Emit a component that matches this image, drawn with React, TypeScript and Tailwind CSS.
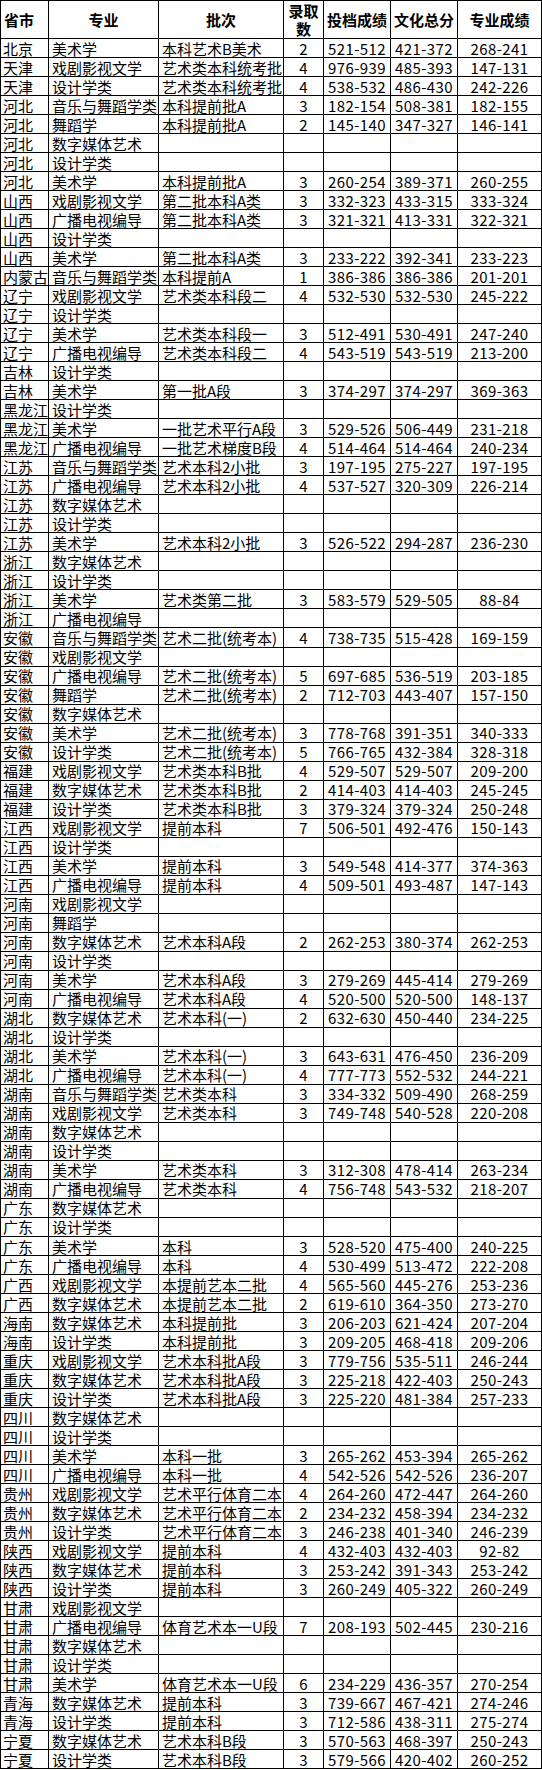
import React from "react";

type Row = [string, string, string?, string?, string?, string?, string?];

const rows: Row[] = [
  ["北京", "美术学", "本科艺术B美术", "2", "521-512", "421-372", "268-241"],
  ["天津", "戏剧影视文学", "艺术类本科统考批", "4", "976-939", "485-393", "147-131"],
  ["天津", "设计学类", "艺术类本科统考批", "4", "538-532", "486-430", "242-226"],
  ["河北", "音乐与舞蹈学类", "本科提前批A", "3", "182-154", "508-381", "182-155"],
  ["河北", "舞蹈学", "本科提前批A", "2", "145-140", "347-327", "146-141"],
  ["河北", "数字媒体艺术"],
  ["河北", "设计学类"],
  ["河北", "美术学", "本科提前批A", "3", "260-254", "389-371", "260-255"],
  ["山西", "戏剧影视文学", "第二批本科A类", "3", "332-323", "433-315", "333-324"],
  ["山西", "广播电视编导", "第二批本科A类", "3", "321-321", "413-331", "322-321"],
  ["山西", "设计学类"],
  ["山西", "美术学", "第二批本科A类", "3", "233-222", "392-341", "233-223"],
  ["内蒙古", "音乐与舞蹈学类", "本科提前A", "1", "386-386", "386-386", "201-201"],
  ["辽宁", "戏剧影视文学", "艺术类本科段二", "4", "532-530", "532-530", "245-222"],
  ["辽宁", "设计学类"],
  ["辽宁", "美术学", "艺术类本科段一", "3", "512-491", "530-491", "247-240"],
  ["辽宁", "广播电视编导", "艺术类本科段二", "4", "543-519", "543-519", "213-200"],
  ["吉林", "设计学类"],
  ["吉林", "美术学", "第一批A段", "3", "374-297", "374-297", "369-363"],
  ["黑龙江", "设计学类"],
  ["黑龙江", "美术学", "一批艺术平行A段", "3", "529-526", "506-449", "231-218"],
  ["黑龙江", "广播电视编导", "一批艺术梯度B段", "4", "514-464", "514-464", "240-234"],
  ["江苏", "音乐与舞蹈学类", "艺术本科2小批", "3", "197-195", "275-227", "197-195"],
  ["江苏", "广播电视编导", "艺术本科2小批", "4", "537-527", "320-309", "226-214"],
  ["江苏", "数字媒体艺术"],
  ["江苏", "设计学类"],
  ["江苏", "美术学", "艺术本科2小批", "3", "526-522", "294-287", "236-230"],
  ["浙江", "数字媒体艺术"],
  ["浙江", "设计学类"],
  ["浙江", "美术学", "艺术类第二批", "3", "583-579", "529-505", "88-84"],
  ["浙江", "广播电视编导"],
  ["安徽", "音乐与舞蹈学类", "艺术二批(统考本)", "4", "738-735", "515-428", "169-159"],
  ["安徽", "戏剧影视文学"],
  ["安徽", "广播电视编导", "艺术二批(统考本)", "5", "697-685", "536-519", "203-185"],
  ["安徽", "舞蹈学", "艺术二批(统考本)", "2", "712-703", "443-407", "157-150"],
  ["安徽", "数字媒体艺术"],
  ["安徽", "美术学", "艺术二批(统考本)", "3", "778-768", "391-351", "340-333"],
  ["安徽", "设计学类", "艺术二批(统考本)", "5", "766-765", "432-384", "328-318"],
  ["福建", "戏剧影视文学", "艺术类本科B批", "4", "529-507", "529-507", "209-200"],
  ["福建", "数字媒体艺术", "艺术类本科B批", "2", "414-403", "414-403", "245-245"],
  ["福建", "设计学类", "艺术类本科B批", "3", "379-324", "379-324", "250-248"],
  ["江西", "戏剧影视文学", "提前本科", "7", "506-501", "492-476", "150-143"],
  ["江西", "设计学类"],
  ["江西", "美术学", "提前本科", "3", "549-548", "414-377", "374-363"],
  ["江西", "广播电视编导", "提前本科", "4", "509-501", "493-487", "147-143"],
  ["河南", "戏剧影视文学"],
  ["河南", "舞蹈学"],
  ["河南", "数字媒体艺术", "艺术本科A段", "2", "262-253", "380-374", "262-253"],
  ["河南", "设计学类"],
  ["河南", "美术学", "艺术本科A段", "3", "279-269", "445-414", "279-269"],
  ["河南", "广播电视编导", "艺术本科A段", "4", "520-500", "520-500", "148-137"],
  ["湖北", "数字媒体艺术", "艺术本科(一)", "2", "632-630", "450-440", "234-225"],
  ["湖北", "设计学类"],
  ["湖北", "美术学", "艺术本科(一)", "3", "643-631", "476-450", "236-209"],
  ["湖北", "广播电视编导", "艺术本科(一)", "4", "777-773", "552-532", "244-221"],
  ["湖南", "音乐与舞蹈学类", "艺术类本科", "3", "334-332", "509-490", "268-259"],
  ["湖南", "戏剧影视文学", "艺术类本科", "3", "749-748", "540-528", "220-208"],
  ["湖南", "数字媒体艺术"],
  ["湖南", "设计学类"],
  ["湖南", "美术学", "艺术类本科", "3", "312-308", "478-414", "263-234"],
  ["湖南", "广播电视编导", "艺术类本科", "4", "756-748", "543-532", "218-207"],
  ["广东", "数字媒体艺术"],
  ["广东", "设计学类"],
  ["广东", "美术学", "本科", "3", "528-520", "475-400", "240-225"],
  ["广东", "广播电视编导", "本科", "4", "530-499", "513-472", "222-208"],
  ["广西", "戏剧影视文学", "本提前艺本二批", "4", "565-560", "445-276", "253-236"],
  ["广西", "数字媒体艺术", "本提前艺本二批", "2", "619-610", "364-350", "273-270"],
  ["海南", "数字媒体艺术", "本科提前批", "3", "206-203", "621-424", "207-204"],
  ["海南", "设计学类", "本科提前批", "3", "209-205", "468-418", "209-206"],
  ["重庆", "戏剧影视文学", "艺术本科批A段", "3", "779-756", "535-511", "246-244"],
  ["重庆", "数字媒体艺术", "艺术本科批A段", "3", "225-218", "422-403", "250-243"],
  ["重庆", "设计学类", "艺术本科批A段", "3", "225-220", "481-384", "257-233"],
  ["四川", "数字媒体艺术"],
  ["四川", "设计学类"],
  ["四川", "美术学", "本科一批", "3", "265-262", "453-394", "265-262"],
  ["四川", "广播电视编导", "本科一批", "4", "542-526", "542-526", "236-207"],
  ["贵州", "戏剧影视文学", "艺术平行体育二本", "4", "264-260", "472-447", "264-260"],
  ["贵州", "数字媒体艺术", "艺术平行体育二本", "2", "234-232", "458-394", "234-232"],
  ["贵州", "设计学类", "艺术平行体育二本", "3", "246-238", "401-340", "246-239"],
  ["陕西", "戏剧影视文学", "提前本科", "4", "432-403", "432-403", "92-82"],
  ["陕西", "数字媒体艺术", "提前本科", "3", "253-242", "391-343", "253-242"],
  ["陕西", "设计学类", "提前本科", "3", "260-249", "405-322", "260-249"],
  ["甘肃", "戏剧影视文学"],
  ["甘肃", "广播电视编导", "体育艺术本一U段", "7", "208-193", "502-445", "230-216"],
  ["甘肃", "数字媒体艺术"],
  ["甘肃", "设计学类"],
  ["甘肃", "美术学", "体育艺术本一U段", "6", "234-229", "436-357", "270-254"],
  ["青海", "数字媒体艺术", "提前本科", "3", "739-667", "467-421", "274-246"],
  ["青海", "设计学类", "提前本科", "3", "712-586", "438-311", "275-274"],
  ["宁夏", "数字媒体艺术", "艺术本科B段", "3", "570-563", "468-397", "250-243"],
  ["宁夏", "设计学类", "艺术本科B段", "3", "579-566", "420-402", "260-252"],
];

const cell = "border-r border-b border-black flex items-center overflow-hidden whitespace-nowrap";
const num = `${cell} h-[19.03px] justify-center tracking-[0.4px]`;

export default function App() {
  return (
    <div
      className="w-[542px] bg-white text-black text-[15px] leading-[19px]"
      style={{ fontFamily: '"Noto Sans CJK SC", "Noto Sans", sans-serif' }}
    >
      <div className="grid grid-cols-[48px_110px_125px_40px_67px_67px_84px] border-l border-t border-black w-fit">
        <div className={`${cell} h-[38px] pl-[3px] font-bold`}>省市</div>
        <div className={`${cell} h-[38px] justify-center font-bold`}>专业</div>
        <div className={`${cell} h-[38px] justify-center font-bold`}>批次</div>
        <div className="border-r border-b border-black h-[38px] flex flex-col items-center justify-center font-bold leading-[18px]">
          <span>录取</span>
          <span>数</span>
        </div>
        <div className={`${cell} h-[38px] justify-center font-bold`}>投档成绩</div>
        <div className={`${cell} h-[38px] justify-center font-bold`}>文化总分</div>
        <div className={`${cell} h-[38px] justify-center font-bold`}>专业成绩</div>
        {rows.map((r, i) => (
          <React.Fragment key={i}>
            <div className={`${cell} h-[19.03px] pl-[2px]`}>{r[0]}</div>
            <div className={`${cell} h-[19.03px] pl-[3px]`}>{r[1]}</div>
            <div className={`${cell} h-[19.03px] pl-[3px]`}>{r[2] ?? ""}</div>
            <div className={`${cell} h-[19.03px] justify-center`}>{r[3] ?? ""}</div>
            <div className={num}>{r[4] ?? ""}</div>
            <div className={num}>{r[5] ?? ""}</div>
            <div className={num}>{r[6] ?? ""}</div>
          </React.Fragment>
        ))}
      </div>
    </div>
  );
}
